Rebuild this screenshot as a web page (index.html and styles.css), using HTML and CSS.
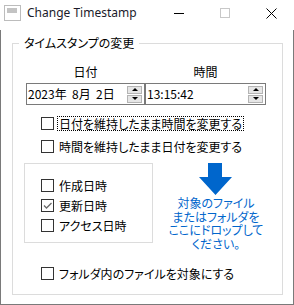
FILE: index.html
```html
<!DOCTYPE html>
<html>
<head>
	<meta charset="utf-8">
	<title>Change Timestamp</title>
	<link rel="stylesheet" href="styles.css">
</head>
<body>
<div class="window">
	<div class="titlebar">
		<span class="app-icon"><span class="app-icon-bar"></span></span>
		<span class="title">Change Timestamp</span>
		<span class="caption">
			<span class="cap-btn"><svg width="10" height="10" viewBox="0 0 10 10"><path d="M0 5.5h10" stroke="#000" stroke-width="1"/></svg></span>
			<span class="cap-btn"><svg width="10" height="10" viewBox="0 0 10 10"><rect x="0.5" y="0.5" width="9" height="9" fill="none" stroke="#c8c8c8"/></svg></span>
			<span class="cap-btn"><svg width="11" height="11" viewBox="0 0 11 11"><path d="M0.5 0.5l10 10M10.5 0.5l-10 10" stroke="#000" stroke-width="1"/></svg></span>
		</span>
	</div>
	<div class="client">
		<fieldset class="group">
			<legend>タイムスタンプの変更</legend>
			<div class="group-body">
				<div class="fields">
					<div class="field date">
						<div class="field-label">日付</div>
						<div class="spin-input"><span class="value">2023年&nbsp;&nbsp;8月&nbsp;&nbsp;2日</span><span class="spinner"><span class="spin up"></span><span class="spin down"></span></span></div>
					</div>
					<div class="field time">
						<div class="field-label">時間</div>
						<div class="spin-input"><span class="value">13:15:42</span><span class="spinner"><span class="spin up"></span><span class="spin down"></span></span></div>
					</div>
				</div>
				<div class="check first"><span class="box"></span><span class="text focus">日付を維持したまま時間を変更する</span></div>
				<div class="check second"><span class="box"></span><span class="text">時間を維持したまま日付を変更する</span></div>
				<div class="lower">
					<div class="targets">
						<div class="check"><span class="box"></span><span class="text">作成日時</span></div>
						<div class="check"><span class="box"><svg width="11" height="11" viewBox="0 0 11 11"><path d="M2 5.5l2.5 2.5 5-5" fill="none" stroke="#6b6b6b" stroke-width="1.3"/></svg></span><span class="text">更新日時</span></div>
						<div class="check"><span class="box"></span><span class="text">アクセス日時</span></div>
					</div>
					<div class="drop">
						<svg class="arrow" width="34" height="33" viewBox="0 0 34 33"><polygon points="9,0 23,0 23,14 33,14 16.5,32 0,14 9,14" fill="#0066cc"/></svg>
						<div class="drop-text">対象のファイル<br>またはフォルダを<br>ここにドロップして<br>ください。</div>
					</div>
				</div>
				<div class="check last"><span class="box"></span><span class="text">フォルダ内のファイルを対象にする</span></div>
			</div>
		</fieldset>
	</div>
</div>
</body>
</html>
```

FILE: styles.css
```css
body,div,fieldset,legend{margin:0;padding:0;}
body{background:#fff;font:12px/14px "Noto Sans CJK JP",sans-serif;font-feature-settings:"palt";color:#000;}
.window{width:294px;height:305px;box-sizing:border-box;display:flex;flex-direction:column;}
.titlebar{height:30px;box-sizing:border-box;padding-bottom:4px;display:flex;align-items:center;}
.app-icon{width:13px;height:12px;border:1px solid #bcbcbc;margin-left:4px;display:flex;padding:2px 0 0 2px;box-sizing:content-box;}
.app-icon-bar{width:10px;height:5px;background:#c3c3c3;}
.title{margin-left:6px;font:12px/14px "Noto Sans",sans-serif;color:#1a1a2a;flex:1;}
.caption{display:flex;}
.cap-btn{width:46px;display:flex;justify-content:center;align-items:center;height:20px;}
.client{flex:1;border:1px solid #7a7a7a;border-top:none;padding:6px 10px 0 11px;}
.group{border:1px solid #dcdcdc;padding:0;}
.group legend{margin-left:6px;padding:0 5px;line-height:14px;}
.group-body{padding:15px 3px 13px 11px;}
.fields{display:flex;margin-left:2px;}
.field{display:flex;flex-direction:column;}
.field.date{width:119px;}
.field.time{width:121px;}
.field-label{text-align:center;line-height:14px;margin-bottom:4px;}
.spin-input{height:22px;box-sizing:border-box;border:1px solid #7a7a7a;display:flex;align-items:center;padding:0 2px 0 1px;}
.value{flex:1;line-height:14px;}
.spinner{width:15px;display:flex;flex-direction:column;gap:1px;}
.spin{height:8px;box-sizing:border-box;border:1px solid #b4b4b4;background:#e6e6e6;display:flex;justify-content:center;align-items:center;}
.spin::after{content:"";border-left:3px solid transparent;border-right:3px solid transparent;}
.spin.up::after{border-bottom:3px solid #000;}
.spin.down::after{border-top:3px solid #000;}
.check{display:flex;align-items:center;height:15px;margin-left:17px;}
.check .box{width:13px;height:13px;box-sizing:border-box;border:1px solid #333;background:#fff;display:flex;justify-content:center;align-items:center;flex:none;}
.check .text{margin-left:3px;padding:0 1px;border:1px solid transparent;line-height:13px;}
.check .text.focus{border:1px dotted #000;}
.check.first{margin-top:11px;}
.check.second{margin-top:8px;}
.lower{display:flex;margin-top:9px;}
.targets{width:129px;height:80px;box-sizing:border-box;border:1px solid #dcdcdc;padding-top:11px;}
.targets .check{height:20px;margin-left:16px;}
.drop{flex:1;display:flex;flex-direction:column;align-items:center;}
.arrow{display:block;}
.drop-text{color:#0066cc;text-align:center;line-height:13.5px;}
.check.last{margin-top:16px;}
```
